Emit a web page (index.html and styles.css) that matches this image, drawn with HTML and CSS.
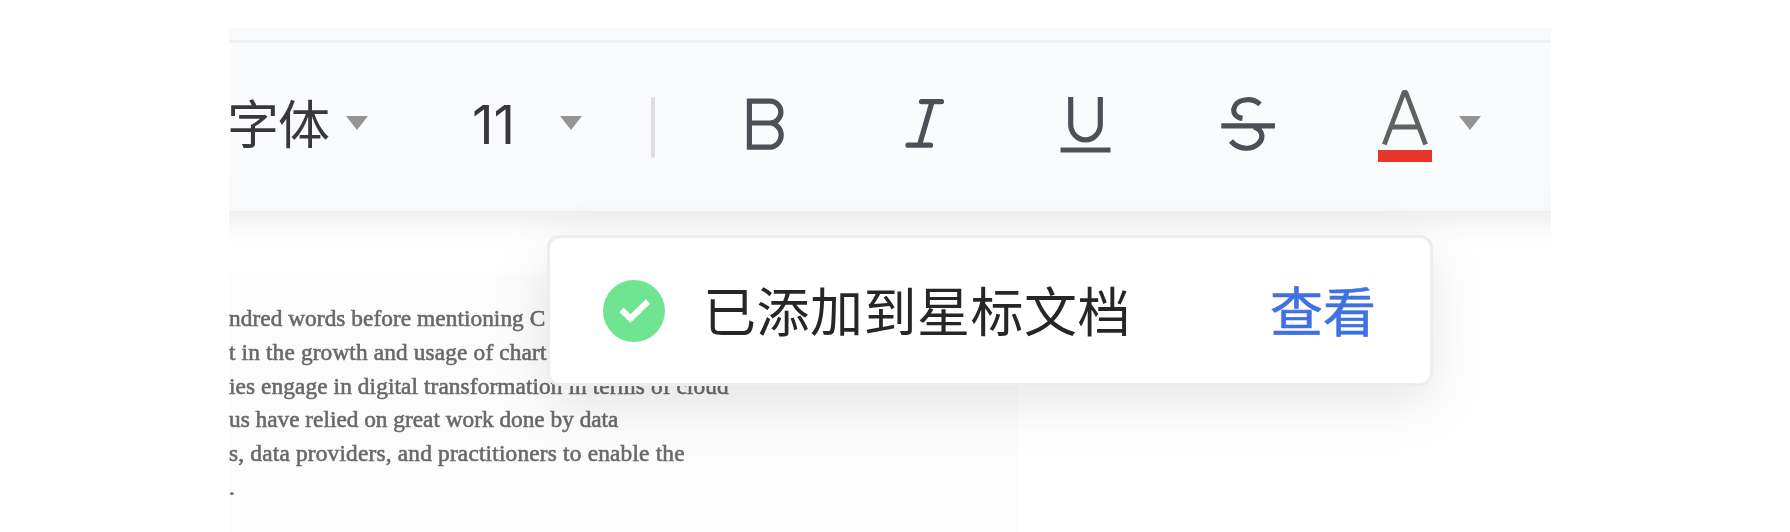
FILE: index.html
```html
<!DOCTYPE html>
<html lang="zh-CN">
<head>
<meta charset="utf-8">
<title>文档</title>
<link rel="stylesheet" href="styles.css">
</head>
<body>
<main class="frame">
  <div class="strip"></div>
  <div class="toolbar">
    <span class="font-name">字体</span>
    <svg class="caret" viewBox="0 0 22 80"><path d="M0 29h22L11 43z"/></svg>
    <span class="font-size">11</span>
    <svg class="caret caret-size" viewBox="0 0 22 80"><path d="M0 29h22L11 43z"/></svg>
    <i class="divider"></i>
    <svg class="icon bold" width="50" height="80" viewBox="740 87 50 80"><path d="M749.400 101.200H770a10.800 10.800 0 0 1 0 21.800H749.400M770 123h1.500a12.400 12.400 0 0 1 0 24.200H749.400M749.400 98.600V149.800"/></svg>
    <svg class="icon italic" width="50" height="80" viewBox="900 87 50 80"><path d="M921.500 101.600H941.500M908 145.200H930.500M932 102L919.500 145" stroke-linecap="round"/></svg>
    <svg class="icon underline" width="60" height="80" viewBox="1055 87 60 80"><path d="M1070.700 97V124.500a14.800 15.300 0 0 0 29.600 0V97M1060.500 150H1110.500"/></svg>
    <svg class="icon strike" width="60" height="80" viewBox="1218 87 60 80"><path d="M1260 104.300C1252 97 1236 98.500 1233.800 109C1233.200 113.500 1236 117.400 1242.500 118.400M1221.300 125.800H1275M1254 127C1263.500 130 1263.800 139 1258 144C1250.500 150.500 1238 149.500 1231 141"/></svg>
    <svg class="color" width="60" height="80" viewBox="1375 87 60 80"><path d="M1384.300 144.500L1403.900 92.500H1405.900L1425.600 144.500M1391.500 127H1418.500" stroke-linejoin="round"/><rect x="1378" y="150" width="54" height="12"/></svg>
    <svg class="caret caret-color" viewBox="0 0 22 80"><path d="M0 29h22L11 43z"/></svg>
  </div>
  <div class="canvas">
    <article class="page">
      <p class="l1">ndred words before mentioning C</p>
      <p class="l2">t in the growth and usage of chart</p>
      <p class="l3">ies engage in digital transformation in terms of cloud</p>
      <p class="l4">us have relied on great work done by data</p>
      <p class="l5">s, data providers, and practitioners to enable the</p>
      <p class="l6">.</p>
    </article>
  </div>
  <div class="toast">
    <svg class="ok" width="62" height="62" viewBox="0 0 62 62"><circle cx="31" cy="31" r="31"/><path d="M18.500 30L27.500 38.500L45 21.500"/></svg>
    <span class="message">已添加到星标文档</span>
    <a class="view">查看</a>
  </div>
</main>
</body>
</html>
```
FILE: styles.css
```css
body {
  margin: 0;
  background: #fff;
}

.frame {
  position: relative;
  width: 1322px;
  height: 504px;
  margin: 28px 0 0 229px;
  overflow: hidden;
  font-family: "Noto Sans CJK SC", sans-serif;
}

.strip {
  height: 12px;
  background: #f9fafc;
  border-bottom: 3px solid #eef0f3;
}

.toolbar {
  display: flex;
  align-items: center;
  height: 168px;
  background: linear-gradient(#fafbfd 75%, #f8f9fa);
  color: #38383a;
}

.toolbar > * {
  flex: none;
}

.font-name {
  width: 105px;
  margin-top: -11px;
  font-size: 52px;
  letter-spacing: -1px;
  line-height: 80px;
  text-indent: -2px;
}

.caret {
  width: 22px;
  height: 80px;
  margin-left: 12px;
  fill: #949495;
}

.font-size {
  width: 45px;
  margin: -5px 0 0 104px;
  font-family: Inter, sans-serif;
  font-size: 53px;
  line-height: 80px;
}

.caret-size { margin-left: 43px; }

.divider {
  width: 4px;
  height: 61px;
  margin-left: 69px;
  border-radius: 2px;
  background: #dedee0;
}

.icon {
  fill: none;
  stroke: #4e5058;
  stroke-width: 5.2px;
}

.bold { margin-left: 85px; }
.italic { margin-left: 110px; }
.underline { margin-left: 105px; }
.strike { margin-left: 103px; }

.color {
  margin-left: 97px;
  fill: none;
  stroke: #606161;
  stroke-width: 4.8px;
}

.color rect {
  fill: #e7352b;
  stroke: none;
}

.caret-color { margin-left: 24px; }

.canvas {
  height: 321px;
  padding-top: 62px;
  box-sizing: border-box;
  background: linear-gradient(#eff0ef, #f5f5f5 10px, #fbfbfb 20px, #fff 32px);
}

.page {
  width: 789px;
  height: 259px;
  padding-top: 29px;
  box-sizing: border-box;
  background: #fcfcfc;
  color: #69696a;
  font-family: "Liberation Serif", serif;
  font-size: 23.3px;
  line-height: 33.8px;
  white-space: nowrap;
  -webkit-text-stroke: .6px #69696a;
}

.page p {
  margin: 0;
  filter: blur(.6px);
}

.l1 { letter-spacing: .06px; }
.l2 { letter-spacing: .15px; }
.l3 { letter-spacing: .1px; }
.l5 { letter-spacing: .2px; }

.toast {
  position: absolute;
  top: 207px;
  left: 318px;
  display: flex;
  align-items: center;
  width: 886px;
  height: 151px;
  padding-left: 53px;
  box-sizing: border-box;
  border: 3px solid #ededed;
  border-radius: 13px;
  background: #fff;
  box-shadow: 0 16px 56px rgba(0, 0, 0, .1);
  font-size: 53px;
  line-height: 80px;
  white-space: nowrap;
}

.ok {
  flex: none;
  fill: #6fe491;
}

.ok path {
  fill: none;
  stroke: #fff;
  stroke-width: 6px;
}

.message {
  width: 428px;
  margin: -4px 0 0 38px;
  color: #262628;
  letter-spacing: .5px;
}

.view {
  margin: -4px 0 0 139px;
  color: #3f70e4;
  -webkit-text-stroke: .6px #3f70e4;
}
```
